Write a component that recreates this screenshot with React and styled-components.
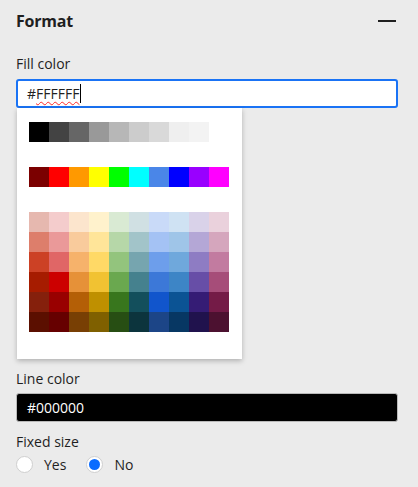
import React, { useState } from "react";
import styled, { createGlobalStyle } from "styled-components";

const GlobalStyle = createGlobalStyle`
  html, body {
    margin: 0;
    padding: 0;
    background: #ebebeb;
    font-family: "Open Sans", "Noto Sans", sans-serif;
    color: #1f1f1f;
  }
`;

const greys = ["#000000", "#434343", "#666666", "#999999", "#b7b7b7", "#cccccc", "#d9d9d9", "#efefef", "#f3f3f3", "#ffffff"];
const brights = ["#7b0000", "#ff0000", "#ff9900", "#ffff00", "#00ff00", "#00ffff", "#4a86e8", "#0000ff", "#9900ff", "#ff00ff"];
const shades = [
  ["#e6b8af", "#f4cccc", "#fce5cd", "#fff2cc", "#d9ead3", "#d0e0e3", "#c9daf8", "#cfe2f3", "#d9d2e9", "#ead1dc"],
  ["#dd7e6b", "#ea9999", "#f9cb9c", "#ffe599", "#b6d7a8", "#a2c4c9", "#a4c2f4", "#9fc5e8", "#b4a7d6", "#d5a6bd"],
  ["#cc4125", "#e06666", "#f6b26b", "#ffd966", "#93c47d", "#76a5af", "#6d9eeb", "#6fa8dc", "#8e7cc3", "#c27ba0"],
  ["#a61c00", "#cc0000", "#e69138", "#f1c232", "#6aa84f", "#45818e", "#3c78d8", "#3d85c6", "#674ea7", "#a64d79"],
  ["#85200c", "#990000", "#b45f06", "#bf9000", "#38761d", "#134f5c", "#1155cc", "#0b5394", "#351c75", "#741b47"],
  ["#5b0f00", "#660000", "#783f04", "#7f6000", "#274e13", "#0c343d", "#1c4587", "#073763", "#20124d", "#4c1130"],
];

const Panel = styled.div`
  padding: 11px 20px 0 16px;
  display: flex;
  flex-direction: column;
`;

const Header = styled.div`
  display: flex;
  align-items: center;
  justify-content: space-between;
  height: 20px;
  margin-bottom: 23px;
`;

const Title = styled.h2`
  margin: 0;
  font-size: 16px;
  line-height: 20px;
  font-weight: 700;
  letter-spacing: -0.2px;
`;

const CollapseBtn = styled.button`
  border: 0;
  padding: 0;
  background: none;
  width: 20px;
  height: 20px;
  display: flex;
  align-items: center;
  justify-content: center;
  margin-right: 1px;
  cursor: pointer;
`;

const Label = styled.div`
  font-size: 14px;
  line-height: 20px;
  margin-top: ${(p) => p.$top || 0}px;
  margin-bottom: ${(p) => p.$gap ?? 5}px;
`;

const ColorField = styled.div`
  box-sizing: border-box;
  height: 29px;
  border: ${(p) => (p.$focused ? "2px solid #1a73f5" : "1px solid #b9b9b9")};
  border-radius: 3px;
  background: ${(p) => p.$bg};
  color: ${(p) => p.$fg};
  display: flex;
  align-items: center;
  padding-left: ${(p) => (p.$focused ? 9 : 10)}px;
  font-size: 14px;
`;

const Misspelt = styled.span`
  text-decoration-line: underline;
  text-decoration-style: wavy;
  text-decoration-color: #ff2a2a;
  text-decoration-thickness: 1px;
  text-underline-offset: 2px;
  text-decoration-skip-ink: none;
`;

const Caret = styled.span`
  display: inline-block;
  width: 1px;
  height: 19px;
  background: #000;
  margin-left: 1px;
`;

const Palette = styled.div`
  box-sizing: border-box;
  width: 225px;
  margin-left: 1px;
  background: #fff;
  box-shadow: 0 2px 5px rgba(0, 0, 0, 0.25);
  padding: 14px 12px 27px;
  display: flex;
  flex-direction: column;
  gap: 25px;
  margin-bottom: 10px;
`;

const SwatchGrid = styled.div`
  display: grid;
  grid-template-columns: repeat(10, 20px);
  grid-auto-rows: 20px;
`;

const Swatch = styled.div`
  background: ${(p) => p.$c};
  cursor: pointer;
`;

const Radios = styled.div`
  display: flex;
  align-items: center;
  gap: 10px;
  height: 20px;
  margin-top: 2px;
  font-size: 14px;
`;

const RadioOption = styled.label`
  display: flex;
  align-items: center;
  gap: 11px;
  margin-right: 10px;
  cursor: pointer;
`;

const RadioDot = styled.span`
  box-sizing: border-box;
  width: 17px;
  height: 17px;
  border-radius: 50%;
  border: 1px solid #cfcfcf;
  background: #fff;
  display: flex;
  align-items: center;
  justify-content: center;

  &::after {
    content: "";
    width: 11px;
    height: 11px;
    border-radius: 50%;
    background: ${(p) => (p.$on ? "#0a6cff" : "transparent")};
  }
`;

const Row = ({ colors }) => (
  <SwatchGrid>
    {colors.map((c, i) => (
      <Swatch key={i} $c={c} />
    ))}
  </SwatchGrid>
);

export default function App() {
  const [fixed, setFixed] = useState("no");

  return (
    <>
      <GlobalStyle />
      <Panel>
        <Header>
          <Title>Format</Title>
          <CollapseBtn aria-label="collapse">
            <svg width="18" height="4" viewBox="0 0 18 4">
              <rect x="0" y="1" width="18" height="2" fill="#1f1f1f" />
            </svg>
          </CollapseBtn>
        </Header>

        <Label>Fill color</Label>
        <ColorField $focused $bg="#fff" $fg="#1f1f1f">
          #<Misspelt>FFFFFF</Misspelt>
          <Caret />
        </ColorField>
        <Palette>
          <Row colors={greys} />
          <Row colors={brights} />
          <SwatchGrid>
            {shades.flat().map((c, i) => (
              <Swatch key={i} $c={c} />
            ))}
          </SwatchGrid>
        </Palette>

        <Label $gap={4}>Line color</Label>
        <ColorField $bg="#000" $fg="#fff">#000000</ColorField>

        <Label $gap={0} $top={10}>Fixed size</Label>
        <Radios>
          <RadioOption onClick={() => setFixed("yes")}>
            <RadioDot $on={fixed === "yes"} />
            Yes
          </RadioOption>
          <RadioOption onClick={() => setFixed("no")}>
            <RadioDot $on={fixed === "no"} />
            No
          </RadioOption>
        </Radios>
      </Panel>
    </>
  );
}
